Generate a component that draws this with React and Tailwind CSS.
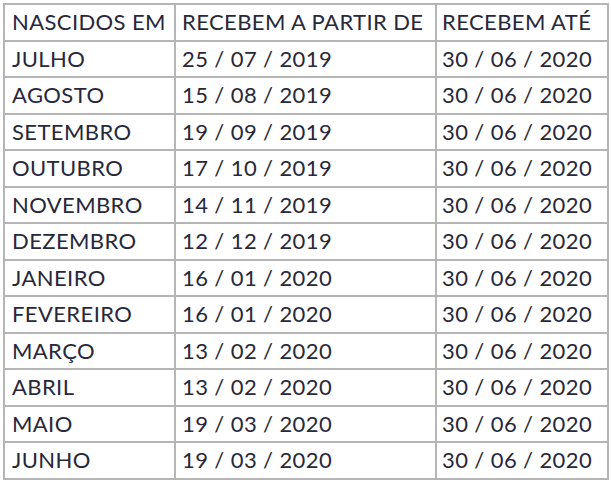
const rows = [
  ["JULHO", "25 / 07 / 2019"],
  ["AGOSTO", "15 / 08 / 2019"],
  ["SETEMBRO", "19 / 09 / 2019"],
  ["OUTUBRO", "17 / 10 / 2019"],
  ["NOVEMBRO", "14 / 11 / 2019"],
  ["DEZEMBRO", "12 / 12 / 2019"],
  ["JANEIRO", "16 / 01 / 2020"],
  ["FEVEREIRO", "16 / 01 / 2020"],
  ["MARÇO", "13 / 02 / 2020"],
  ["ABRIL", "13 / 02 / 2020"],
  ["MAIO", "19 / 03 / 2020"],
  ["JUNHO", "19 / 03 / 2020"],
];

export default function App() {
  return (
    <div className="w-[611px] h-[482px] bg-white pt-[3px] pl-[3px]" style={{ fontFamily: "Lato, 'Noto Sans', sans-serif" }}>
      <table className="border-collapse text-[22px] tracking-[0.4px] text-[#27283a] leading-none">
        <tbody>
          <tr className="h-[36.5px]">
            <td className="border-2 border-[#b5b5b5] w-[171px] pl-[7px] align-middle">NASCIDOS EM</td>
            <td className="border-2 border-[#b5b5b5] w-[261px] pl-[6px] align-middle">RECEBEM A PARTIR DE</td>
            <td className="border-2 border-[#b5b5b5] w-[172px] pl-[5px] align-middle">RECEBEM ATÉ</td>
          </tr>
          {rows.map(([m, d]) => (
            <tr key={m} className="h-[36.5px]">
              <td className="border-2 border-[#b5b5b5] pl-[7px] align-middle">{m}</td>
              <td className="border-2 border-[#b5b5b5] pl-[6px] align-middle">{d}</td>
              <td className="border-2 border-[#b5b5b5] pl-[5px] align-middle">30 / 06 / 2020</td>
            </tr>
          ))}
        </tbody>
      </table>
    </div>
  );
}
